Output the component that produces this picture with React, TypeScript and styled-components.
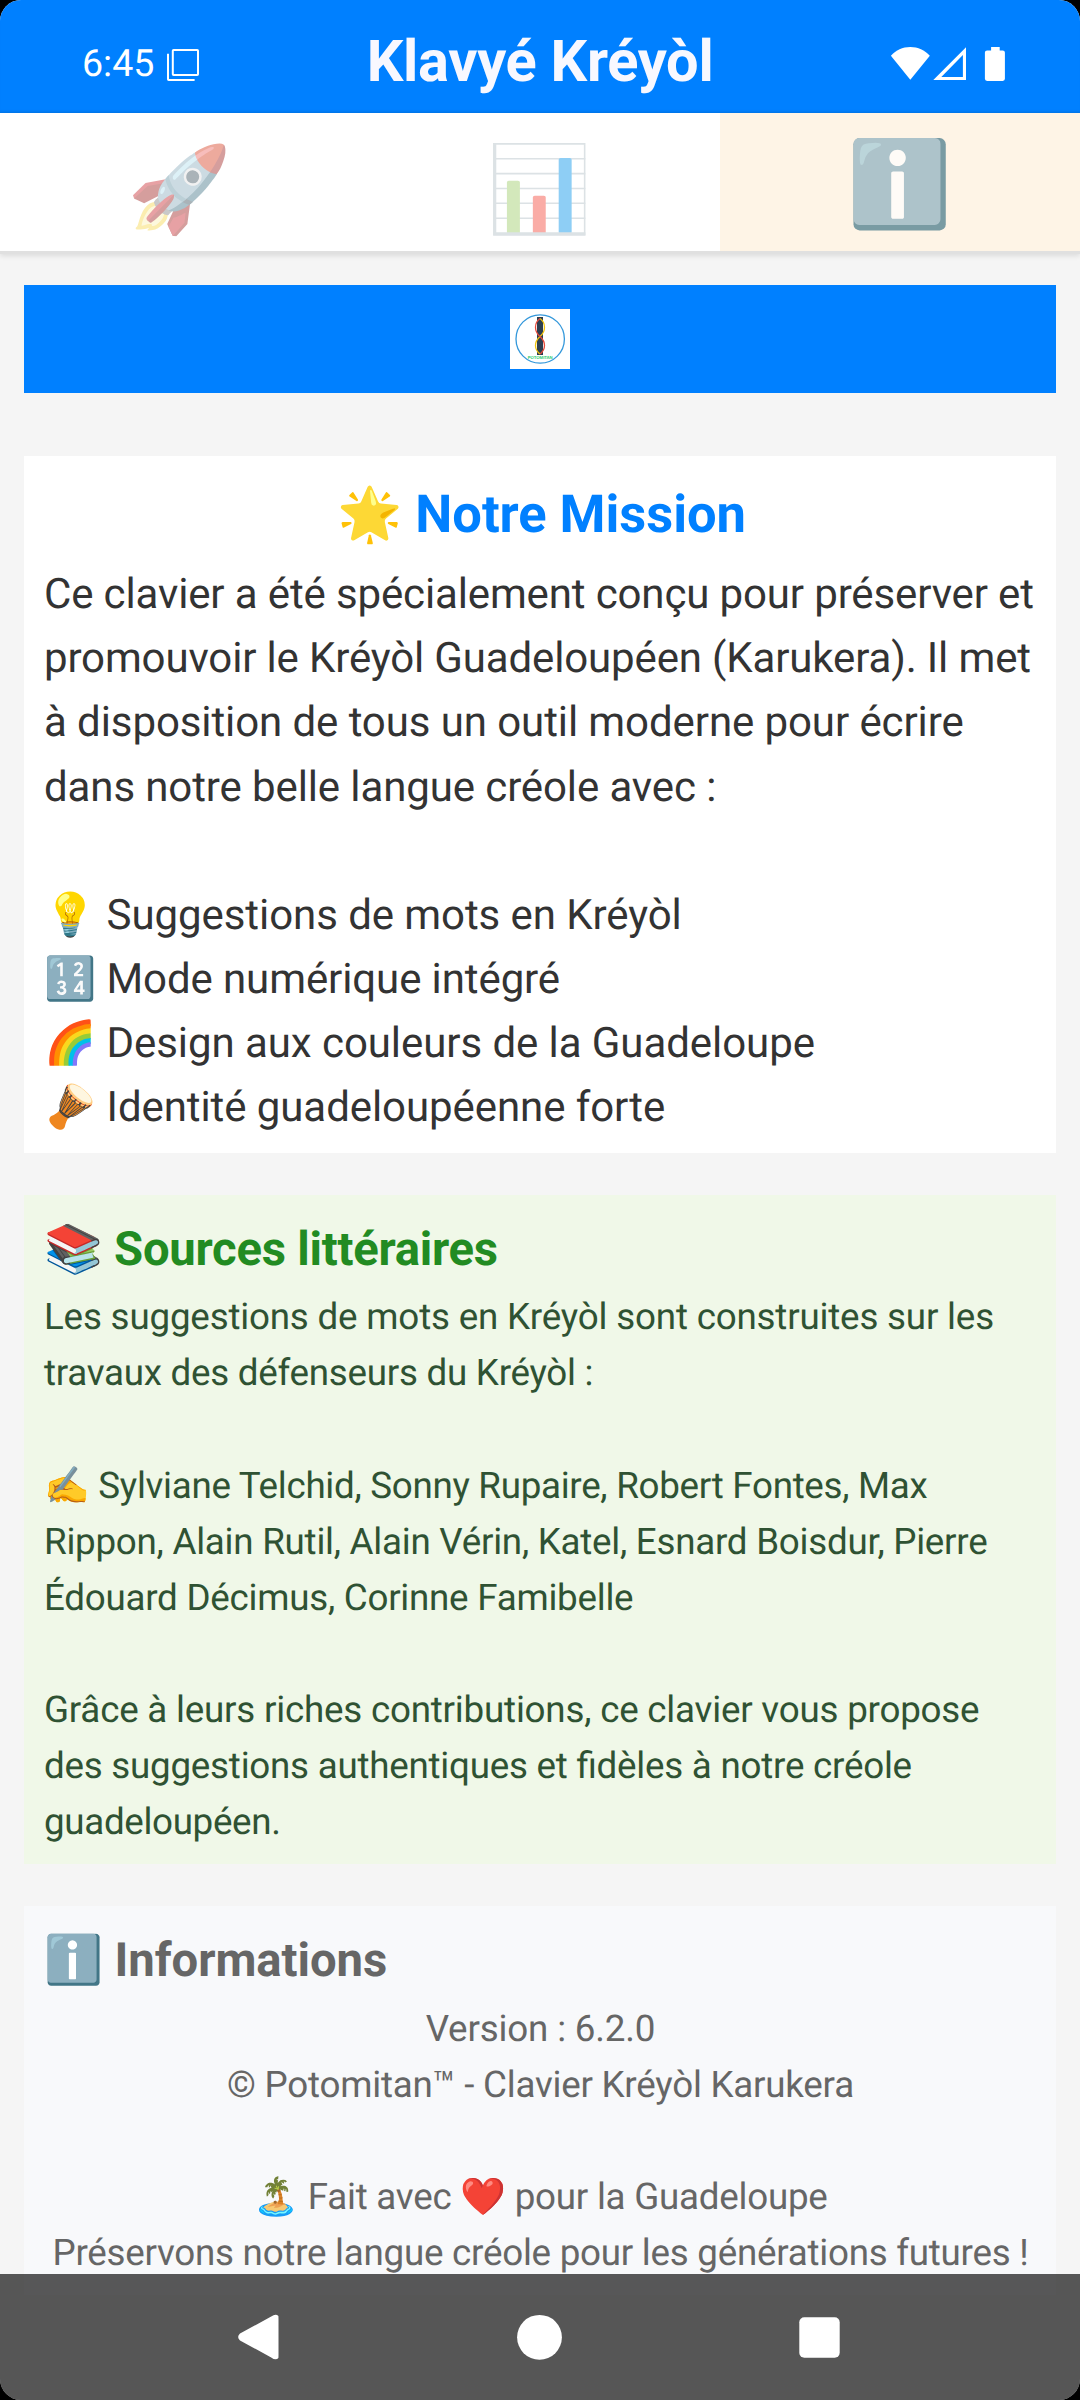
import React from "react";
import styled, { createGlobalStyle } from "styled-components";

const GlobalStyle = createGlobalStyle`
  * { box-sizing: border-box; }
  html, body { margin: 0; padding: 0; background: #000; }
  body {
    font-family: Roboto, "Noto Color Emoji", sans-serif;
    text-rendering: geometricPrecision;
    -webkit-font-smoothing: antialiased;
  }
`;

const Screen = styled.div`
  position: relative;
  width: 1080px;
  height: 2400px;
  overflow: hidden;
  border-radius: 21px;
  background: #f5f5f5;
  display: flex;
  flex-direction: column;
`;

const Header = styled.header`
  flex: none;
  height: 113px;
  background: #0080ff;
  display: grid;
  grid-template-columns: 1fr auto 1fr;
  box-shadow: inset 0 -3px 3px -2px rgba(0, 0, 0, 0.12);
`;

const StatusLeft = styled.div`
  display: grid;
  grid-template-columns: 84px 34px;
  align-content: start;
  padding: 42px 0 0 82px;
`;

const Clock = styled.span`
  font-size: 37.6px;
  line-height: 44px;
  color: #fff;
`;

const CopyIcon = styled.svg`
  margin-top: 6px;
`;

const Title = styled.h1`
  margin: 0;
  padding-top: 28px;
  font-size: 57.75px;
  line-height: 68px;
  letter-spacing: -0.3px;
  font-weight: 700;
  color: #f8f8ff;
  white-space: nowrap;
`;

const StatusRight = styled.div`
  display: flex;
  justify-content: flex-end;
  padding: 46px 74px 0 0;
`;

const Tabs = styled.nav`
  flex: none;
  height: 138px;
  display: grid;
  grid-template-columns: repeat(3, 360px);
  background: #fff;
  box-shadow: 0 3px 0 #e0e0e0, 0 5px 5px rgba(0, 0, 0, 0.1);
`;

const Tab = styled.button<{ $active?: boolean }>`
  border: 0;
  padding: ${(p) => (p.$active ? "5px 0 0" : "15px 0 0")};
  display: flex;
  align-items: center;
  justify-content: center;
  background: ${(p) => (p.$active ? "#fef4e6" : "#fff")};
  font-family: inherit;
  font-size: 84px;
  line-height: 1;
`;

const TabGlyph = styled.span<{ $opacity: number }>`
  opacity: ${(p) => p.$opacity};
  color: #000;
`;

const Content = styled.main`
  flex: 1;
  display: flex;
  flex-direction: column;
  padding: 34px 24px 0;
`;

const Banner = styled.div`
  flex: none;
  height: 108px;
  display: flex;
  align-items: center;
  justify-content: center;
  background: #0080ff;
  margin-bottom: 63px;
`;

const Card = styled.section<{ $bg: string; $height: number }>`
  flex: none;
  height: ${(p) => p.$height}px;
  padding: 21px 20px;
  background: ${(p) => p.$bg};
  margin-bottom: 42px;
`;

const MissionTitle = styled.h2`
  margin: 7px 0 18.3px;
  padding-left: 3px;
  font-size: 52.5px;
  line-height: 61px;
  letter-spacing: -0.05px;
  font-weight: 700;
  text-align: center;
  color: #0080ff;
`;

const SectionTitle = styled.h3<{ $color: string; $tracking: number; $gap: number }>`
  margin: 5px 0 ${(p) => p.$gap}px;
  font-size: 47.25px;
  line-height: 56px;
  letter-spacing: ${(p) => p.$tracking}px;
  font-weight: 700;
  color: ${(p) => p.$color};
`;

const Text = styled.div<{ $size: number; $pitch: number; $color: string; $center?: boolean }>`
  font-size: ${(p) => p.$size}px;
  line-height: ${(p) => p.$pitch}px;
  color: ${(p) => p.$color};
  text-align: ${(p) => (p.$center ? "center" : "left")};
  padding-left: ${(p) => (p.$center ? 1 : 0)}px;
`;

const Line = styled.div<{ $tracking: number }>`
  height: 1lh;
  letter-spacing: ${(p) => p.$tracking}px;
  font-feature-settings: "liga" 1;
  white-space: pre;
`;

const NavBar = styled.footer`
  position: absolute;
  left: 0;
  right: 0;
  bottom: 0;
  height: 126px;
  display: flex;
  align-items: center;
  justify-content: center;
  gap: 235px;
  background: rgba(0, 0, 0, 0.65);
`;

const NavIcon = styled.svg.attrs({ width: 46, height: 46, viewBox: "0 0 46 46", fill: "#fff" })`
  flex: none;
`;

type TrackedLine = [text: string, tracking: number];

const MISSION: TrackedLine[] = [
  ["Ce clavier a été spécialement conçu pour préserver et", -0.135],
  ["promouvoir le Kréyòl Guadeloupéen (Karukera). Il met", -0.145],
  ["à disposition de tous un outil moderne pour écrire", -0.09],
  ["dans notre belle langue créole avec :", -0.11],
  ["", 0],
  ["💡 Suggestions de mots en Kréyòl", -0.07],
  ["🔢 Mode numérique intégré", -0.1],
  ["🌈 Design aux couleurs de la Guadeloupe", -0.07],
  ["🪘 Identité guadeloupéenne forte", -0.08],
];

const SOURCES: TrackedLine[] = [
  ["Les suggestions de mots en Kréyòl sont construites sur les", -0.19],
  ["travaux des défenseurs du Kréyòl :", -0.26],
  ["", 0],
  ["✍️ Sylviane Telchid, Sonny Rupaire, Robert Fontes, Max", -0.29],
  ["Rippon, Alain Rutil, Alain Vérin, Katel, Esnard Boisdur, Pierre", -0.25],
  ["Édouard Décimus, Corinne Famibelle", -0.25],
  ["", 0],
  ["Grâce à leurs riches contributions, ce clavier vous propose", -0.21],
  ["des suggestions authentiques et fidèles à notre créole", -0.24],
  ["guadeloupéen.", -0.33],
];

const INFOS: TrackedLine[] = [
  ["Version : 6.2.0", -0.17],
  ["© Potomitan™ - Clavier Kréyòl Karukera", -0.23],
  ["", 0],
  ["🏝️ Fait avec ❤️ pour la Guadeloupe", -0.24],
  ["Préservons notre langue créole pour les générations futures !", -0.25],
];

const Lines = ({ items }: { items: TrackedLine[] }) => (
  <>
    {items.map(([text, tracking], i) => (
      <Line key={i} $tracking={tracking}>{text}</Line>
    ))}
  </>
);

const Logo = () => (
  <svg width="60" height="60" viewBox="0 0 60 60">
    <rect width="60" height="60" fill="#fff" />
    <circle cx="30.200" cy="30" r="24.200" fill="none" stroke="#3498db" strokeWidth="1.300" />
    <rect x="27" y="8" width="6" height="38" fill="#2c3e50" />
    <path d="M30 9.500C36 14 36 22 30 27.500S24 40 30 45" fill="none" stroke="#f1c40f" strokeWidth="1.300" />
    <path d="M30 9.500C24 14 24 22 30 27.500S36 40 30 45" fill="none" stroke="#e74c3c" strokeWidth="1.300" />
    <text x="30.200" y="50.300" textAnchor="middle" textLength="25" fontFamily="Liberation Sans, sans-serif" fontWeight="700" fontSize="4.300" fill="#2ecc71">POTOMITAN</text>
  </svg>
);

export default function App() {
  return (
    <>
      <GlobalStyle />
      <Screen>
        <Header>
          <StatusLeft>
            <Clock>6:45</Clock>
            <CopyIcon width="34" height="36" viewBox="0 0 34 36" fill="none" stroke="#fff" strokeWidth="2" strokeLinejoin="round">
              <rect x="6.800" y="2" width="25.200" height="25" rx="0.800" />
              <path d="M2 5.700v25.600q0 .7.700.7H28.600" />
            </CopyIcon>
          </StatusLeft>
          <Title>Klavyé Kréyòl</Title>
          <StatusRight>
            <svg width="116" height="36" viewBox="0 0 116 36" fill="#fff">
              <path d="M0.900 9.700C6 4 12.500 1 20.300 1S34.600 4 39.800 9.700L20.300 33.700Z" />
              <path fillRule="evenodd" d="M43.300 34L76 1.300V34ZM51.300 30.900H72.900V9Z" />
              <path d="M101.100 1h8.600v3.400h3q2.200 0 2.200 2V32.800q0 2.100-2.200 2.100H97.100q-2.200 0-2.200-2.100V6.400q0-2 2.200-2h4Z" />
            </svg>
          </StatusRight>
        </Header>
        <Tabs>
          <Tab><TabGlyph $opacity={0.44}>🚀</TabGlyph></Tab>
          <Tab><TabGlyph $opacity={0.44}>📊</TabGlyph></Tab>
          <Tab $active><TabGlyph $opacity={0.7}>ℹ️</TabGlyph></Tab>
        </Tabs>
        <Content>
          <Banner><Logo /></Banner>
          <Card $bg="#ffffff" $height={697}>
            <MissionTitle>🌟 Notre Mission</MissionTitle>
            <Text $size={42} $pitch={64.1} $color="#333333"><Lines items={MISSION} /></Text>
          </Card>
          <Card $bg="#f0f8e8" $height={669}>
            <SectionTitle $color="#228b22" $tracking={-0.26} $gap={12.4}>📚 Sources littéraires</SectionTitle>
            <Text $size={36.75} $pitch={56.1} $color="#2f5233"><Lines items={SOURCES} /></Text>
          </Card>
          <Card $bg="#f8f9fb" $height={389}>
            <SectionTitle $color="#666666" $tracking={-0.05} $gap={12.6}>ℹ️ Informations</SectionTitle>
            <Text $size={36.75} $pitch={56.1} $color="#666666" $center><Lines items={INFOS} /></Text>
          </Card>
        </Content>
        <NavBar>
          <NavIcon>
            <path d="M35.200 2.600Q39.700-1 42.400 2Q42.500 3 42.500 5V41Q42.500 43 42.400 44Q39.700 47 35.200 43.400L4 26.500Q0.300 23 4 19.500Z" />
          </NavIcon>
          <NavIcon><circle cx="22.500" cy="23.300" r="22.400" /></NavIcon>
          <NavIcon><rect x="1.300" y="3.300" width="40.400" height="40.400" rx="5" /></NavIcon>
        </NavBar>
      </Screen>
    </>
  );
}
